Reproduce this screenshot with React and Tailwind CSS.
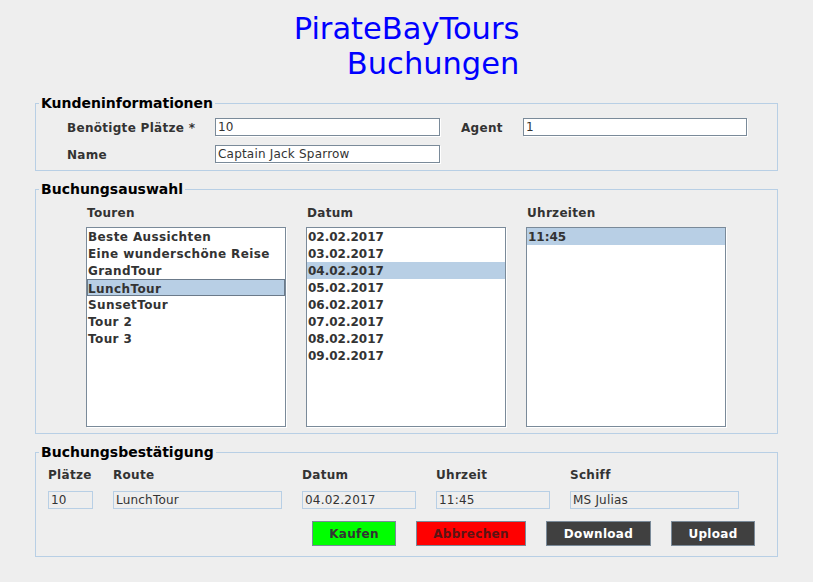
import React from "react";

const touren = ["Beste Aussichten", "Eine wunderschöne Reise", "GrandTour", "LunchTour", "SunsetTour", "Tour 2", "Tour 3"];
const daten = ["02.02.2017", "03.02.2017", "04.02.2017", "05.02.2017", "06.02.2017", "07.02.2017", "08.02.2017", "09.02.2017"];
const zeiten = ["11:45"];

// titled border like Swing's TitledBorder
function Panel({ title, className, children }) {
  return (
    <fieldset className={`border border-[#b8cfe5] ${className}`}>
      <legend className="ml-[3px] px-[2px] text-[14px] leading-[16px] font-bold text-black">{title}</legend>
      {children}
    </fieldset>
  );
}

function Field({ width, value }) {
  return (
    <div className={`${width} h-[18px] border border-[#7a8a99] bg-white pl-[2px] text-[12px] leading-[16px] text-[#333333] tracking-[0.2px] shadow-[1px_1px_0_#ffffff]`}>
      {value}
    </div>
  );
}

function ReadOnly({ value }) {
  return (
    <div className="h-[18px] border border-[#b8cfe5] bg-[#eeeeee] pl-[2px] text-[12px] leading-[16px] text-[#333333] tracking-[0.2px]">
      {value}
    </div>
  );
}

function List({ items, selected, focused, spaced }) {
  return (
    <div className="h-[200px] border border-[#7a8a99] bg-white shadow-[1px_1px_0_#ffffff]">
      {items.map((item, i) => (
        <div
          key={item}
          className={`h-[17px] pt-[1px] text-[12px] leading-[16px] font-bold text-[#333333] ${spaced ? "tracking-[0.4px]" : ""} ${
            i === selected ? "bg-[#b8cfe5]" : ""
          } ${i === selected && focused ? "border border-[#6b7a8a] pt-0 leading-[15px] pl-0" : "pl-[1px]"}`}
        >
          {item}
        </div>
      ))}
    </div>
  );
}

const label = "text-[12px] leading-[14px] font-bold text-[#333333] tracking-[0.3px]";

export default function App() {
  return (
    <div className="w-[813px] h-[582px] bg-[#eeeeee] font-['DejaVu_Sans',sans-serif] overflow-hidden">
      <div className="flex justify-center pt-[11px]">
        <div className="text-right text-[30.5px] leading-[35px] text-[#0000ff]">
          <div>PirateBayTours</div>
          <div>Buchungen</div>
        </div>
      </div>

      <div className="mx-[35px] mt-[14px] flex flex-col gap-[10px]">
        <Panel title="Kundeninformationen">
          <div className="pl-[31px] pt-[7px] pb-[7px] flex flex-col gap-[9px]">
            <div className="flex items-center">
              <span className={`w-[148px] pt-[2px] ${label}`}>Benötigte Plätze *</span>
              <Field width="w-[225px]" value="10" />
              <span className={`ml-[21px] w-[62px] pt-[2px] ${label}`}>Agent</span>
              <Field width="w-[224px]" value="1" />
            </div>
            <div className="flex items-center">
              <span className={`w-[148px] pt-[2px] ${label}`}>Name</span>
              <Field width="w-[225px]" value="Captain Jack Sparrow" />
            </div>
          </div>
        </Panel>

        <Panel title="Buchungsauswahl">
          <div className="pl-[50px] pt-[9px] pb-[6px] grid grid-cols-[200px_200px_200px] gap-x-[20px]">
            <span className={`pl-[1px] ${label}`}>Touren</span>
            <span className={`pl-[1px] ${label}`}>Datum</span>
            <span className={`pl-[1px] ${label}`}>Uhrzeiten</span>
            <div className="mt-[7px]">
              <List items={touren} selected={3} focused spaced />
            </div>
            <div className="mt-[7px]">
              <List items={daten} selected={2} />
            </div>
            <div className="mt-[7px]">
              <List items={zeiten} selected={0} />
            </div>
          </div>
        </Panel>

        <Panel title="Buchungsbestätigung">
          <div className="pl-[12px] pt-[8px] grid grid-cols-[45px_169px_114px_114px_169px] gap-x-[20px] gap-y-[9px]">
            <span className={label}>Plätze</span>
            <span className={label}>Route</span>
            <span className={label}>Datum</span>
            <span className={label}>Uhrzeit</span>
            <span className={label}>Schiff</span>
            <ReadOnly value="10" />
            <ReadOnly value="LunchTour" />
            <ReadOnly value="04.02.2017" />
            <ReadOnly value="11:45" />
            <ReadOnly value="MS Julias" />
          </div>
          <div className="flex justify-end gap-[20px] pr-[22px] mt-[12px] pb-[10px]">
            <button className="w-[84px] h-[25px] border border-[#7a8a99] bg-[#00ff00] text-[12px] font-bold text-[#333333] tracking-[0.3px]">Kaufen</button>
            <button className="w-[110px] h-[25px] border border-[#7a8a99] bg-[#ff0000] text-[12px] font-bold text-[#5c1414] tracking-[0.3px]">Abbrechen</button>
            <button className="w-[105px] h-[25px] border border-[#7a8a99] bg-[#404040] text-[12px] font-bold text-white tracking-[0.3px]">Download</button>
            <button className="w-[84px] h-[25px] border border-[#7a8a99] bg-[#404040] text-[12px] font-bold text-white tracking-[0.3px]">Upload</button>
          </div>
        </Panel>
      </div>
    </div>
  );
}
